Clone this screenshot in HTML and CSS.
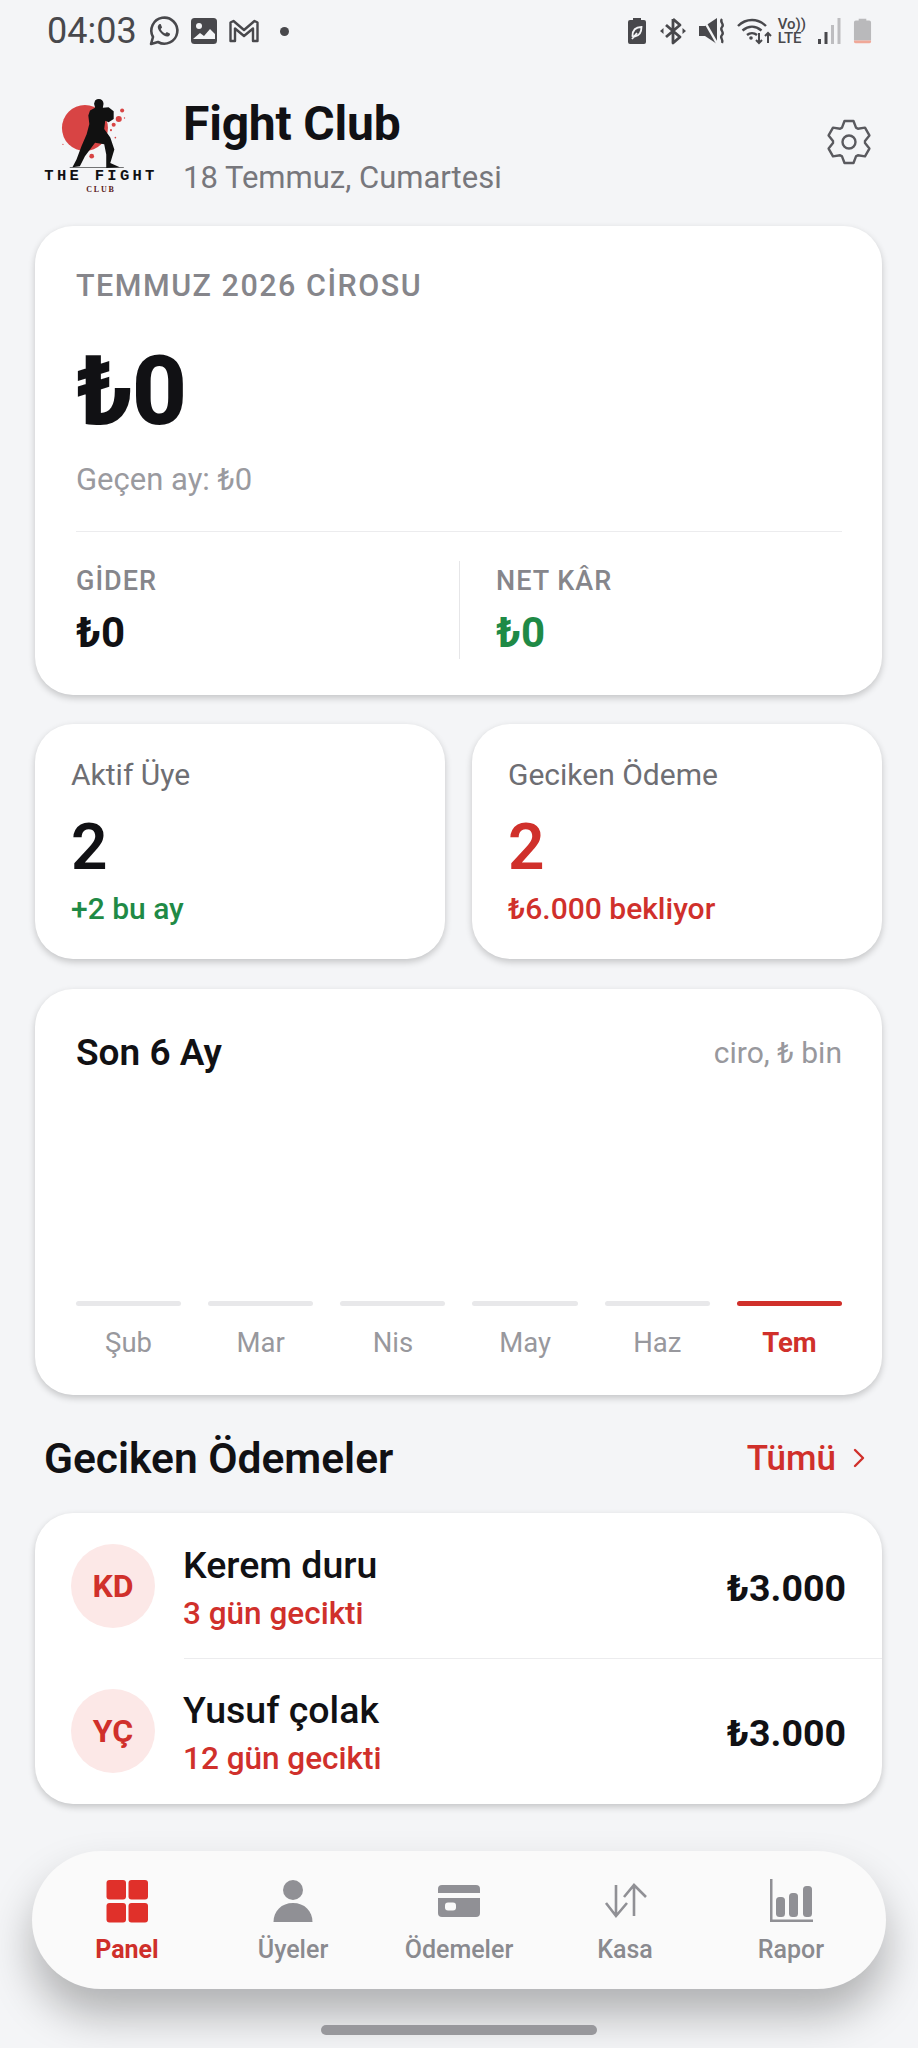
FILE: index.html
```html
<!DOCTYPE html>
<html lang="tr">
  <head>
    <meta charset="UTF-8" />
    <meta name="viewport" content="width=device-width, initial-scale=1.0" />
    <title>Fight Club</title>
    <link rel="stylesheet" href="styles.css">
  </head>
  <body>
    <div class="status-bar">
      <div class="status-left">
        <span class="time">04:03</span>
        <svg class="st-wa" viewBox="0 0 32 32"><path d="M3 29l2-7a13 13 0 1 1 5 5z" fill="none" stroke="#48484c" stroke-width="2.6" stroke-linejoin="round"/><path d="M11 9.500c-2 1.500-1.500 4.500 1.500 8s6.500 5 8.500 3.500c1.200-1 1.200-2.200.8-2.600l-3-1.500-1.500 1.500c-2-.8-3.800-2.600-4.600-4.500l1.400-1.500-1.300-3.200c-.5-.5-1.500-.4-2.300.3z" fill="#48484c"/></svg>
        <svg class="st-img" viewBox="0 0 28 28"><rect x="1" y="1" width="26" height="26" rx="3.500" fill="#48484c"/><circle cx="9" cy="9" r="3" fill="#f4f5f7"/><path d="M3 22l7-6 4 3 6-7 5 5v5H3z" fill="#f4f5f7"/></svg>
        <svg class="st-gm" viewBox="0 0 32 26"><path d="M2.500 23V4.500l3-1.500L16 12 26.500 3l3 1.500V23h-4.500V10.500L16 18 7 10.500V23z" fill="none" stroke="#48484c" stroke-width="2.400" stroke-linejoin="round"/></svg>
        <span class="st-dot"></span>
      </div>
      <div class="status-right">
        <svg class="st-batt" viewBox="0 0 20 28"><path d="M6 1h8v2h3a2 2 0 0 1 2 2v20a2 2 0 0 1-2 2H3a2 2 0 0 1-2-2V5a2 2 0 0 1 2-2h3z" fill="#48484c"/><path d="M5.500 19c0-6 3-9 9-9 0 6-3 9-7 9.500zM5 22l5-6" fill="none" stroke="#f4f5f7" stroke-width="1.800"/></svg>
        <svg class="st-bt" viewBox="0 0 26 28"><path d="M13 2v24l7-6-14-12M13 2l7 6L6 20" fill="none" stroke="#48484c" stroke-width="2.800" stroke-linejoin="round"/><path d="M0 14l3.500-3v6zM26 14l-3.500-3v6z" fill="#48484c"/></svg>
        <svg class="st-mute" viewBox="0 0 28 28"><path d="M1 9h6l12-8v26L7 19H1z" fill="#48484c"/><path d="M4 0l16 28" stroke="#f4f5f7" stroke-width="2.400"/><path d="M24 2c-3 3 3 5 0 8s3 5 0 8 2 4 0 8" fill="none" stroke="#48484c" stroke-width="2.400"/></svg>
        <svg class="st-wifi" viewBox="0 0 36 28"><path d="M2 9c8-8 20-8 28 0M6.500 13.500c6-5 13-5 19 0M11 18c3-2.500 7-2.500 10 0" fill="none" stroke="#48484c" stroke-width="2.400"/><circle cx="15" cy="21" r="1.800" fill="#48484c"/><path d="M23 16v10m-3-3l3 3 3-3M32 26V16m-3 3l3-3 3 3" fill="none" stroke="#48484c" stroke-width="2"/></svg>
        <span class="st-volte">Vo))<br>LTE</span>
        <svg class="st-signal" viewBox="0 0 24 28"><rect x="1" y="22" width="3" height="5" fill="#48484c"/><rect x="7.500" y="15" width="3" height="12" fill="#48484c"/><rect x="14" y="8" width="3" height="19" fill="#bdbdc0"/><rect x="20.500" y="1" width="3" height="26" fill="#bdbdc0"/></svg>
        <svg class="st-level" viewBox="0 0 20 28"><path d="M6 1h8v2h3a2 2 0 0 1 2 2v19H1V5a2 2 0 0 1 2-2h3z" fill="#b9b9bb"/><path d="M1 24h18v1a2 2 0 0 1-2 2H3a2 2 0 0 1-2-2z" fill="#f0a898"/></svg>
      </div>
    </div>

    <header class="header">
      <div class="logo">
        <svg class="logo-art" viewBox="45 30 335 210">
          <circle cx="165" cy="122" r="68" fill="#d84444"/>
          <g fill="#d84444">
            <circle cx="275" cy="70" r="6"/><circle cx="265" cy="95" r="9"/><circle cx="250" cy="112" r="6"/><circle cx="242" cy="128" r="3"/><circle cx="185" cy="205" r="7"/><circle cx="255" cy="150" r="2.500"/><circle cx="100" cy="170" r="2"/><circle cx="282" cy="92" r="2"/>
          </g>
          <path d="M195 40C205 32 220 36 220 50L218 62 235 60 250 72V95L235 105 225 100 222 125 240 150 252 185 240 225 268 238 228 240V200L222 170 195 165 165 205 150 235 128 238 140 215 155 175 170 140 178 110 175 85 180 70 195 62 192 50Z" fill="#111"/>
          <path d="M120 239h160" stroke="#111" stroke-width="2"/>
        </svg>
        <div class="logo-name">THE FIGHT</div>
        <div class="logo-club">CLUB</div>
      </div>
      <div class="header-text">
        <h1>Fight Club</h1>
        <p>18 Temmuz, Cumartesi</p>
      </div>
      <svg class="gear" viewBox="0 0 44 44" fill="none" stroke="#5a5a5f" stroke-width="2.400" stroke-linejoin="round"><circle cx="22" cy="22" r="6.500"/><path d="M15 7.600 17.500 1h9L29 7.600 30.900 8.700 38 7.600 42.400 15.400 38 20.900V23.100L42.400 28.600 38 36.400 30.900 35.300 29 36.400 26.500 43h-9L15 36.400 13.100 35.300 6 36.400 1.600 28.600 6 23.100V20.900L1.600 15.400 6 7.600 13.100 8.700Z"/></svg>
    </header>

    <section class="card revenue">
      <div class="rev-label">TEMMUZ 2026 CİROSU</div>
      <div class="rev-value">₺0</div>
      <div class="rev-prev">Geçen ay: ₺0</div>
      <div class="rev-split">
        <div class="split-col">
          <div class="split-label">GİDER</div>
          <div class="split-value">₺0</div>
        </div>
        <div class="split-col split-right">
          <div class="split-label">NET KÂR</div>
          <div class="split-value green">₺0</div>
        </div>
      </div>
    </section>

    <div class="stats">
      <div class="card stat">
        <div class="stat-label">Aktif Üye</div>
        <div class="stat-value">2</div>
        <div class="stat-sub green">+2 bu ay</div>
      </div>
      <div class="card stat">
        <div class="stat-label">Geciken Ödeme</div>
        <div class="stat-value red">2</div>
        <div class="stat-sub red">₺6.000 bekliyor</div>
      </div>
    </div>

    <section class="card chart">
      <div class="chart-head">
        <h2>Son 6 Ay</h2>
        <span>ciro, ₺ bin</span>
      </div>
      <div class="bars">
        <div class="bar-col"><div class="bar"></div><span>Şub</span></div>
        <div class="bar-col"><div class="bar"></div><span>Mar</span></div>
        <div class="bar-col"><div class="bar"></div><span>Nis</span></div>
        <div class="bar-col"><div class="bar"></div><span>May</span></div>
        <div class="bar-col"><div class="bar"></div><span>Haz</span></div>
        <div class="bar-col active"><div class="bar"></div><span>Tem</span></div>
      </div>
    </section>

    <div class="section-head">
      <h2>Geciken Ödemeler</h2>
      <a class="see-all">Tümü
        <svg viewBox="0 0 14 22" fill="none" stroke="#d0302b" stroke-width="2.400" stroke-linecap="round" stroke-linejoin="round"><path d="M3 3l8 8-8 8"/></svg>
      </a>
    </div>

    <section class="card late-list">
      <div class="late-row">
        <div class="avatar">KD</div>
        <div class="late-info">
          <div class="late-name">Kerem duru</div>
          <div class="late-days">3 gün gecikti</div>
        </div>
        <div class="late-amount">₺3.000</div>
      </div>
      <div class="late-row">
        <div class="avatar">YÇ</div>
        <div class="late-info">
          <div class="late-name">Yusuf çolak</div>
          <div class="late-days">12 gün gecikti</div>
        </div>
        <div class="late-amount">₺3.000</div>
      </div>
    </section>

    <nav class="tabbar">
      <div class="tab active">
        <svg viewBox="0 0 44 44"><rect x="1.500" y="1" width="19.500" height="19.500" rx="3"/><rect x="23.500" y="1" width="19.500" height="19.500" rx="3"/><rect x="1.500" y="24" width="19.500" height="19.500" rx="3"/><rect x="23.500" y="24" width="19.500" height="19.500" rx="3"/></svg>
        <span>Panel</span>
      </div>
      <div class="tab">
        <svg viewBox="0 0 44 44"><circle cx="22" cy="11" r="10"/><path d="M2.500 43c0-11 8-19 19.500-19s19.500 8 19.500 19z"/></svg>
        <span>Üyeler</span>
      </div>
      <div class="tab">
        <svg viewBox="0 0 44 44"><path d="M5 6h34a4 4 0 0 1 4 4v4H1v-4a4 4 0 0 1 4-4z"/><path d="M1 19h42v15a4 4 0 0 1-4 4H5a4 4 0 0 1-4-4z"/><rect class="card-hole" x="8" y="23.500" width="11" height="8" rx="3"/></svg>
        <span>Ödemeler</span>
      </div>
      <div class="tab">
        <svg class="line-icon" viewBox="0 0 44 44"><path d="M13 6v31M3 24l10 13 11-13M31 37V6M21 18L31 6l12 12"/></svg>
        <span>Kasa</span>
      </div>
      <div class="tab">
        <svg viewBox="0 0 44 44"><path d="M1 0h2.500v40.500H45V43H1z"/><rect x="7" y="18" width="9" height="20" rx="3.500"/><rect x="20" y="14" width="9" height="24" rx="3.500"/><rect x="34" y="7" width="9" height="31" rx="3.500"/></svg>
        <span>Rapor</span>
      </div>
    </nav>

    <div class="home-pill"></div>
  </body>
</html>
```

FILE: styles.css
```css
* {
  margin: 0;
  padding: 0;
  box-sizing: border-box;
}

body {
  width: 918px;
  height: 2048px;
  background: #f4f5f7;
  font-family: Roboto, "Liberation Sans", sans-serif;
  color: #111114;
  overflow: hidden;
}

.green {
  color: #1f8a46;
}

.red {
  color: #d0302b;
}

/* status bar */
.status-bar {
  height: 60px;
  padding: 2px 46px 0 47px;
  display: flex;
  justify-content: space-between;
  align-items: center;
}

.status-left,
.status-right {
  display: flex;
  align-items: center;
}

.time {
  font-size: 36px;
  color: #48484c;
  margin-right: 11px;
}

.st-wa {
  width: 32px;
  height: 32px;
  margin-right: 10px;
}

.st-img {
  width: 28px;
  height: 28px;
  margin-right: 10px;
}

.st-gm {
  width: 32px;
  height: 26px;
}

.st-dot {
  width: 9px;
  height: 9px;
  border-radius: 50%;
  background: #48484c;
  margin-left: 20px;
}

.status-right svg {
  height: 28px;
}

.st-batt {
  width: 20px;
  margin-right: 13px;
}

.st-bt {
  width: 26px;
  margin-right: 12px;
}

.st-mute {
  width: 28px;
  margin-right: 10px;
}

.st-wifi {
  width: 36px;
  margin-right: 6px;
}

.st-volte {
  font-size: 15px;
  line-height: 14px;
  font-weight: 500;
  color: #48484c;
  margin-right: 11px;
}

.st-signal {
  width: 24px;
  margin-right: 12px;
}

.st-level {
  width: 19px;
}

/* header */
.header {
  display: flex;
  align-items: flex-start;
  padding: 37px 47px 0 44px;
  height: 166px;
}

.logo {
  width: 114px;
  text-align: center;
  margin-right: 25px;
}

.logo-art {
  display: block;
  width: 114px;
  height: 71px;
}

.logo-name {
  font-family: "Liberation Mono", monospace;
  font-weight: 700;
  font-size: 15.500px;
  line-height: 16px;
  letter-spacing: 3.300px;
  white-space: nowrap;
}

.logo-club {
  font-family: "Liberation Serif", serif;
  font-weight: 700;
  font-size: 8px;
  line-height: 12px;
  letter-spacing: 1.800px;
  color: #5a2020;
}

.header-text {
  flex: 1;
}

.header-text h1 {
  font-size: 48px;
  line-height: 54px;
  font-weight: 700;
  letter-spacing: -0.2px;
}

.header-text p {
  font-size: 31px;
  line-height: 38px;
  color: #77777c;
  margin-top: 8px;
}

.gear {
  width: 44px;
  height: 44px;
  margin-top: 23px;
  overflow: visible;
}

/* cards */
.card {
  background: #fff;
  border-radius: 38px;
  margin: 0 36px 0 35px;
  box-shadow: 0 3px 7px rgba(0, 0, 0, 0.2);
}

.revenue {
  height: 469px;
  padding: 42px 40px 0 41px;
}

.rev-label {
  font-size: 30.500px;
  line-height: 36px;
  font-weight: 500;
  letter-spacing: 1.500px;
  color: #86868b;
}

.rev-value {
  font-size: 96px;
  line-height: 112px;
  font-weight: 800;
  margin-top: 31px;
  letter-spacing: -2px;
}

.rev-prev {
  font-size: 31px;
  line-height: 36px;
  color: #9a9a9f;
  margin-top: 15px;
}

.rev-split {
  display: flex;
  margin-top: 33px;
  padding-top: 29px;
  border-top: 1px solid #ececee;
}

.split-col {
  width: 50%;
  height: 98px;
  padding-top: 4px;
}

.split-right {
  border-left: 1px solid #e6e6e8;
  padding-left: 36px;
}

.split-label {
  font-size: 27px;
  line-height: 32px;
  font-weight: 500;
  letter-spacing: 1px;
  color: #86868b;
}

.split-value {
  font-size: 42px;
  line-height: 50px;
  font-weight: 700;
  margin-top: 11px;
}

.stats {
  display: flex;
  gap: 27px;
  margin: 29px 36px 0 35px;
}

.stats .card {
  margin: 0;
}

.stat {
  flex: 1;
  height: 235px;
  padding: 33px 36px 0 36px;
}

.stat-label {
  font-size: 30px;
  line-height: 36px;
  color: #6e6e73;
}

.stat-value {
  font-size: 64px;
  line-height: 76px;
  font-weight: 600;
  margin-top: 17px;
}

.stat-sub {
  font-size: 30px;
  line-height: 36px;
  font-weight: 500;
  margin-top: 5px;
}

/* chart */
.chart {
  height: 406px;
  margin-top: 30px;
  padding: 40px 40px 0 41px;
}

.chart-head {
  display: flex;
  justify-content: space-between;
  align-items: center;
  height: 46px;
}

.chart-head h2 {
  font-size: 37px;
  font-weight: 600;
}

.chart-head span {
  font-size: 30px;
  color: #98989d;
}

.bars {
  display: grid;
  grid-template-columns: repeat(6, 1fr);
  gap: 27px;
  margin-top: 226px;
}

.bar {
  height: 5px;
  border-radius: 3px;
  background: #e8e8ea;
}

.bar-col {
  text-align: center;
}

.bar-col span {
  display: block;
  font-size: 27.500px;
  line-height: 32px;
  margin-top: 21px;
  color: #98989d;
}

.bar-col.active .bar {
  background: #d0302b;
}

.bar-col.active span {
  color: #d0302b;
  font-weight: 700;
}

/* late payments */
.section-head {
  display: flex;
  justify-content: space-between;
  align-items: center;
  height: 48px;
  margin-top: 39px;
  padding: 0 52px 0 44px;
}

.section-head h2 {
  font-size: 42.500px;
  font-weight: 600;
}

.see-all {
  display: flex;
  align-items: center;
  gap: 16px;
  font-size: 35px;
  font-weight: 500;
  color: #d0302b;
}

.see-all svg {
  width: 14px;
  height: 22px;
}

.late-list {
  height: 291px;
  margin-top: 31px;
}

.late-row {
  display: flex;
  align-items: center;
  height: 145px;
  padding: 0 36px 0 36px;
  position: relative;
}

.late-row + .late-row::before {
  content: "";
  position: absolute;
  top: 0;
  left: 149px;
  right: 0;
  height: 1px;
  background: #ececee;
}

.avatar {
  width: 84px;
  height: 84px;
  border-radius: 50%;
  background: #fce8e7;
  color: #d0302b;
  font-size: 32px;
  font-weight: 700;
  display: flex;
  align-items: center;
  justify-content: center;
  margin-right: 28px;
}

.late-info {
  flex: 1;
  padding-top: 5px;
}

.late-name {
  font-size: 37.500px;
  line-height: 44px;
  font-weight: 500;
}

.late-days {
  font-size: 31.500px;
  line-height: 38px;
  font-weight: 500;
  color: #d0302b;
  margin-top: 8px;
}

.late-amount {
  font-size: 37.500px;
  font-weight: 700;
  padding-top: 4px;
}

/* bottom nav */
.tabbar {
  display: flex;
  height: 138px;
  margin: 47px 32px 0;
  padding: 28px 12px 0;
  background: #fafafa;
  border-radius: 69px;
  box-shadow: 0 26px 44px rgba(0, 0, 0, 0.28);
}

.tab {
  flex: 1;
  text-align: center;
  color: #8a8a8f;
}

.tab svg {
  display: block;
  width: 44px;
  height: 44px;
  margin: 0 auto;
  fill: #909095;
}

.tab .card-hole {
  fill: #fafafa;
}

.tab .line-icon {
  fill: none;
  stroke: #909095;
  stroke-width: 2.600;
}

.tab span {
  display: block;
  font-size: 25px;
  line-height: 30px;
  font-weight: 500;
  margin-top: 12px;
}

.tab.active svg {
  fill: #e0302a;
}

.tab.active span {
  color: #cf2f2a;
  font-weight: 700;
}

.home-pill {
  width: 276px;
  height: 10px;
  border-radius: 5px;
  background: #98989c;
  margin: 36px auto 0;
}
```
